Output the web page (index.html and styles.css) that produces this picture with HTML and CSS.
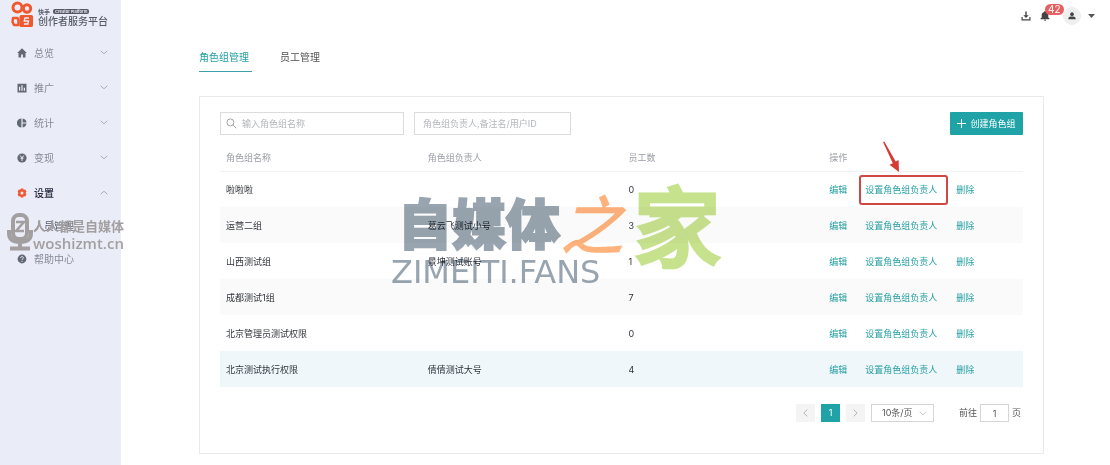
FILE: index.html
```html
<!DOCTYPE html>
<html lang="zh-CN">
<head>
<meta charset="utf-8">
<title>创作者服务平台</title>
<link rel="stylesheet" href="styles.css">
</head>
<body>
<div class="app">
  <aside class="sidebar">
    <div class="brand">
      <svg class="brand-mark" viewBox="0 0 24 27" fill="none" stroke="#f0592f" stroke-width="3">
        <circle cx="7.500" cy="6.500" r="4.500"/>
        <circle cx="17" cy="7.500" r="3.700"/>
        <path d="M11 15.500h10.500v9H11z" fill="#f0592f" stroke-linejoin="round"/>
        <path d="M3 17h4.500l1 2.500v4.500H4L2.500 21z" stroke-width="2.500" stroke-linejoin="round"/>
        <path d="M19 17h-4l-.8 3h4.300l-.6 3h-4" stroke="#eceef8" stroke-width="1.300"/>
      </svg>
      <div class="brand-text">
        <div class="brand-top"><span>快手</span><span class="brand-pill">Creator Platform</span></div>
        <div class="brand-name">创作者服务平台</div>
      </div>
    </div>
    <nav class="menu">
      <a class="item" href="#"><svg class="icon" viewBox="0 0 10 10"><path d="M5 .3.2 4.900h1.300V9.500h2.600V6.400h1.800v3.100h2.600V4.900h1.300z"/></svg><span>总览</span><svg class="chev" viewBox="0 0 8 5"><path d="m.7.8 3.300 3L7.300.8"/></svg></a>
      <a class="item" href="#"><svg class="icon" viewBox="0 0 10 10"><path fill-rule="evenodd" d="M.5.8h9v8.600h-9zM2 3.800v4h1.200v-4zm2.400-1.500v5.500h1.200V2.300zm2.400 2.500v3H8v-3z"/></svg><span>推广</span><svg class="chev" viewBox="0 0 8 5"><path d="m.7.8 3.300 3L7.300.8"/></svg></a>
      <a class="item" href="#"><svg class="icon" viewBox="0 0 10 10"><path d="M4.400.5v9A4.500 4.500 0 0 1 4.400.5zM5.600.5a4.500 4.500 0 0 1 3.900 3.900H5.600zM5.600 5.600h3.900a4.500 4.500 0 0 1-3.900 3.900z"/></svg><span>统计</span><svg class="chev" viewBox="0 0 8 5"><path d="m.7.8 3.300 3L7.300.8"/></svg></a>
      <a class="item" href="#"><svg class="icon" viewBox="0 0 10 10"><circle cx="5" cy="5" r="4.600"/><path class="cut" d="M3.200 2.500 5 4.900l1.800-2.400M5 4.900v3M3.500 5.200h3"/></svg><span>变现</span><svg class="chev" viewBox="0 0 8 5"><path d="m.7.8 3.300 3L7.300.8"/></svg></a>
      <a class="item current" href="#"><svg class="icon" viewBox="0 0 10 10"><path fill-rule="evenodd" d="M3.800.5h2.400l.5 1.300 1.500-.2 1.200 2L8.600 5l.8 1.400-1.200 2-1.500-.2-.5 1.300H3.800l-.5-1.300-1.500.2-1.200-2L1.400 5 .6 3.600l1.200-2 1.500.2zM5 3.500a1.500 1.500 0 1 0 0 3 1.500 1.500 0 0 0 0-3z"/></svg><span>设置</span><svg class="chev" viewBox="0 0 8 5"><path d="m.7 4.200 3.300-3 3.300 3"/></svg></a>
      <a class="item sub" href="#"><span>人员管理</span></a>
      <a class="item help" href="#"><svg class="icon" viewBox="0 0 10 10"><circle cx="5" cy="5" r="4.400"/><path class="cut" d="M3.600 4c0-1.900 2.900-1.800 2.800-.1C6.300 4.900 5 4.800 5 6M5 6.900v1"/></svg><span>帮助中心</span></a>
    </nav>
    <div class="mic-mark" aria-hidden="true">
      <svg class="mic" viewBox="0 0 26 38" fill="none" stroke="#a39e9f">
        <rect x="6" y="2" width="14" height="24" rx="6" stroke-width="4"/>
        <path d="M2 17v3c0 6 4 9 11 9s11-3 11-9v-3M13 29v6M3 35.500h20" stroke-width="4"/>
        <path d="M9 9h8l-8 9h8" stroke-width="2.500"/>
      </svg>
      <div><div class="mic-cn">人人都是自媒体</div><div class="mic-url">woshizmt.cn</div></div>
    </div>
  </aside>

  <div class="main">
    <header class="topbar">
      <button class="tool" aria-label="下载"><svg class="tool-icon" viewBox="0 0 10 10"><path d="M4.300.5h1.400v3.700h2L5 7 2.300 4.200h2zM.5 6h1.200v2.300h6.600V6h1.200v3.500h-9z"/></svg></button>
      <button class="tool bell" aria-label="消息"><svg class="tool-icon" viewBox="0 0 10 10"><path d="M5 0c.6 0 .9.400.9.900C7.500 1.400 8.300 2.600 8.300 4v2.600l1.200 1v.6h-9v-.6l1.200-1V4c0-1.400.8-2.600 2.400-3.100C4.100.400 4.400 0 5 0zM3.900 8.700h2.200C6.100 10.300 3.900 10.300 3.900 8.700z"/></svg><span class="badge">42</span></button>
      <button class="tool user" aria-label="账户"><span class="avatar"><svg class="tool-icon small" viewBox="0 0 10 10"><circle cx="5" cy="2.700" r="2.300"/><path d="M.5 9.200V7.500C1.500 5.200 8.500 5.200 9.500 7.500v1.700z"/></svg></span><svg class="caret" viewBox="0 0 7 4"><path d="M0 0h7L3.500 4z"/></svg></button>
    </header>

    <main class="content">
      <nav class="tabs"><a class="tab active" href="#">角色组管理</a><a class="tab" href="#">员工管理</a></nav>
      <section class="card">
        <div class="filters">
          <label class="search"><svg viewBox="0 0 12 12"><circle cx="4.800" cy="4.800" r="3.800"/><path d="m7.600 7.600 3.600 3.600"/></svg><input type="text" placeholder="输入角色组名称" aria-label="角色组名称"></label>
          <input class="owner" type="text" placeholder="角色组负责人,备注名/用户ID" aria-label="角色组负责人">
          <button class="create"><svg viewBox="0 0 9 9"><path d="M4.500 0v9M0 4.500h9"/></svg>创建角色组</button>
        </div>
        <table class="groups">
          <thead><tr><th>角色组名称</th><th>角色组负责人</th><th>员工数</th><th>操作</th></tr></thead>
          <tbody>
            <tr><td>啦啦啦</td><td></td><td>0</td><td><div class="ops"><a href="#">编辑</a><a class="marked" href="#">设置角色组负责人<svg class="arrow" viewBox="0 0 20 32"><path d="m2 1 9.800 21.200-3.300 1.600L18 31l-.4-12-2.900 1.600L3.300.4z"/></svg></a><a href="#">删除</a></div></td></tr>
            <tr><td>运营二组</td><td>葛云飞测试小号</td><td>3</td><td><div class="ops"><a href="#">编辑</a><a href="#">设置角色组负责人</a><a href="#">删除</a></div></td></tr>
            <tr><td>山西测试组</td><td>景坤测试账号</td><td>1</td><td><div class="ops"><a href="#">编辑</a><a href="#">设置角色组负责人</a><a href="#">删除</a></div></td></tr>
            <tr><td>成都测试1组</td><td></td><td>7</td><td><div class="ops"><a href="#">编辑</a><a href="#">设置角色组负责人</a><a href="#">删除</a></div></td></tr>
            <tr><td>北京管理员测试权限</td><td></td><td>0</td><td><div class="ops"><a href="#">编辑</a><a href="#">设置角色组负责人</a><a href="#">删除</a></div></td></tr>
            <tr class="hover"><td>北京测试执行权限</td><td>倩倩测试大号</td><td>4</td><td><div class="ops"><a href="#">编辑</a><a href="#">设置角色组负责人</a><a href="#">删除</a></div></td></tr>
          </tbody>
        </table>
        <div class="pager">
          <button class="page" aria-label="上一页"><svg viewBox="0 0 5 8"><path d="M4.300.7.8 4l3.500 3.300"/></svg></button>
          <button class="page on">1</button>
          <button class="page" aria-label="下一页"><svg viewBox="0 0 5 8"><path d="M.7.7 4.200 4 .7 7.300"/></svg></button>
          <span class="size"><select aria-label="每页条数"><option>10条/页</option></select><svg class="chev" viewBox="0 0 8 5"><path d="m.7.8 3.300 3L7.300.8"/></svg></span>
          <label class="jump">前往<input type="text" value="1">页</label>
        </div>
      </section>
    </main>
  </div>
</div>
<div class="site-mark" aria-hidden="true">
  <span class="mark-cn">自媒体</span>
  <span class="mark-zhi">之</span>
  <span class="mark-jia">家</span>
  <span class="mark-url">ZIMEITI.FANS</span>
</div>
</body>
</html>
```
FILE: styles.css
```css
* { box-sizing: border-box; }
body {
  margin: 0;
  background: #fff;
  color: #30343c;
  font: 9px/14px Inter, "Noto Sans CJK SC", sans-serif;
}
button, input, select { font: inherit; color: inherit; margin: 0; padding: 0; }
button { border: 0; background: none; cursor: pointer; }
a { color: inherit; text-decoration: none; }
svg { display: block; flex: none; }

.app { display: flex; min-height: 100vh; }

/* Sidebar */
.sidebar { position: relative; flex: none; width: 121px; background: #eaedf7; }
.brand { display: flex; gap: 4px; padding: 1px 0 0 10px; height: 35px; }
.brand-mark { width: 24px; height: 27px; }
.brand-text { padding-top: 7px; color: #555b66; white-space: nowrap; }
.brand-top { display: flex; align-items: center; gap: 3px; font-size: 6px; line-height: 7px; font-weight: 700; }
.brand-pill { padding: 0 2px; border-radius: 2px; background: #555862; color: #dde0ea; font-size: 4px; line-height: 5px; }
.brand-name { font-size: 10px; line-height: 13px; font-weight: 500; }
.menu { display: flex; flex-direction: column; }
.item {
  display: flex; align-items: center; gap: 7px; height: 35px;
  padding: 0 13px 0 17px; color: #858a96; font-size: 10px;
}
.icon { width: 10px; height: 10px; fill: #626875; }
.icon .cut { fill: none; stroke: #eaedf7; stroke-width: 1; }
.chev { width: 8px; height: 5px; margin-left: auto; fill: none; stroke: #a9adb8; }
.current { color: #22283a; font-weight: 500; }
.current .icon { fill: #ee5a35; }
.sub { height: 31px; padding-left: 34px; color: #596070; }
.help { height: 35px; }

.mic-mark { position: absolute; left: 7px; top: 213px; display: flex; color: #a39e9f; white-space: nowrap; }
.mic { width: 26px; height: 38px; }
.mic-cn { padding-top: 5px; font-size: 13px; line-height: 16px; font-weight: 700; }
.mic-url { font: 600 15px/19px "Open Sans", sans-serif; }

/* Top bar */
.main { flex: 1; min-width: 0; }
.topbar { display: flex; justify-content: flex-end; align-items: center; gap: 9px; height: 31px; padding-right: 15px; }
.tool { position: relative; display: flex; align-items: center; }
.tool-icon { width: 10px; height: 10px; fill: #444; }
.small { width: 8px; height: 8px; }
.badge {
  position: absolute; left: 5px; top: -7px; padding: 0 3px; border-radius: 6px;
  background: #e95f61; color: #fff; font-size: 10px; line-height: 11px;
}
.user { gap: 7px; margin-left: 4px; }
.avatar { display: grid; place-items: center; width: 18px; height: 18px; border-radius: 50%; background: #efefef; }
.caret { width: 7px; height: 4px; fill: #555; }

/* Content */
.content { padding: 16px 66px 11px 78px; }
.tabs { display: flex; gap: 28px; font-size: 10px; line-height: 20px; }
.tab { height: 25px; color: #555; padding-right: 3px; }
.active { color: #23a0a2; border-bottom: 1px solid #3f9fad; }
.card { margin-top: 24px; padding: 15px 20px 31px; border: 1px solid #e9e9eb; }

.filters { display: flex; gap: 10px; height: 23px; }
.filters input { outline: 0; }
.filters ::placeholder { color: #b3b6bb; opacity: 1; }
.search, .owner { border: 1px solid #dcdcde; background: #fff; }
.search { display: flex; align-items: center; gap: 5px; width: 184px; padding-left: 5px; }
.search svg { width: 11px; height: 11px; fill: none; stroke: #999; }
.search input { flex: 1; min-width: 0; border: 0; background: none; }
.owner { width: 157px; padding: 0 8px; }
.create {
  display: flex; align-items: center; justify-content: center; gap: 4px;
  width: 73px; margin-left: auto; background: #1fa3a6; color: #fff; border-radius: 1px;
}
.create svg { width: 9px; height: 9px; fill: none; stroke: #fff; }

.groups { width: 100%; margin-top: 9px; border-collapse: collapse; table-layout: fixed; }
.groups th, .groups td { padding: 1px 0 0 7px; text-align: left; white-space: nowrap; }
.groups th:first-child, .groups td:first-child { padding-left: 6px; }
.groups th { height: 27px; color: #999da5; font-weight: 400; border-bottom: 1px solid #f1f1f3; }
.groups td { height: 36px; }
.groups tr:nth-child(even) td { background: #fafafa; }
.groups tr.hover td { background: #f0f7fb; }
.ops { display: grid; grid-template-columns: 36px 91px auto; justify-items: start; color: #27a0a1; }
.marked { position: relative; }
.marked::after { content: ""; position: absolute; inset: -8px -11px -8px -6px; border: 2px solid #cf4845; border-radius: 3px; }
.arrow { position: absolute; left: 16px; top: -42px; width: 20px; height: 32px; fill: #d83a34; }

.pager { display: flex; justify-content: flex-end; align-items: center; margin-top: 17px; padding-right: 2px; height: 18px; color: #555; }
.page { display: grid; place-items: center; width: 19px; height: 18px; margin-right: 6px; background: #f4f4f5; }
.page svg { width: 5px; height: 8px; fill: none; stroke: #b5b5b8; }
.page.on { background: #1fa3a6; color: #fff; }
.size { position: relative; width: 63px; height: 18px; }
.size select { appearance: none; width: 100%; height: 100%; padding-left: 10px; border: 1px solid #d5d5d7; border-radius: 0; background: #fff; }
.size .chev { position: absolute; right: 7px; top: 7px; stroke: #ccc; }
.jump { display: flex; align-items: center; gap: 3px; margin-left: 25px; }
.jump input { width: 29px; height: 18px; border: 1px solid #d5d5d7; text-align: center; }

/* Overlaid site watermark */
.site-mark { position: absolute; left: 392px; top: 176px; width: 340px; height: 120px; mix-blend-mode: multiply; pointer-events: none; }
.site-mark span { position: absolute; white-space: nowrap; }
.mark-cn { left: 6px; top: 20px; font-size: 54px; line-height: 60px; font-weight: 900; color: #98a5b0; -webkit-text-stroke: 2px #98a5b0; }
.mark-zhi { left: 168px; top: 18px; font-size: 64px; line-height: 64px; font-weight: 500; font-style: italic; color: #ffb27b; }
.mark-jia { left: 242px; top: 1px; font-size: 86px; line-height: 104px; font-weight: 400; color: #c7e28d; -webkit-text-stroke: 5px #c7e28d; stroke-linejoin: round; }
.mark-url { left: -1px; top: 80px; font: 32px/32px "DejaVu Sans", sans-serif; color: #98a5b0; }
```
